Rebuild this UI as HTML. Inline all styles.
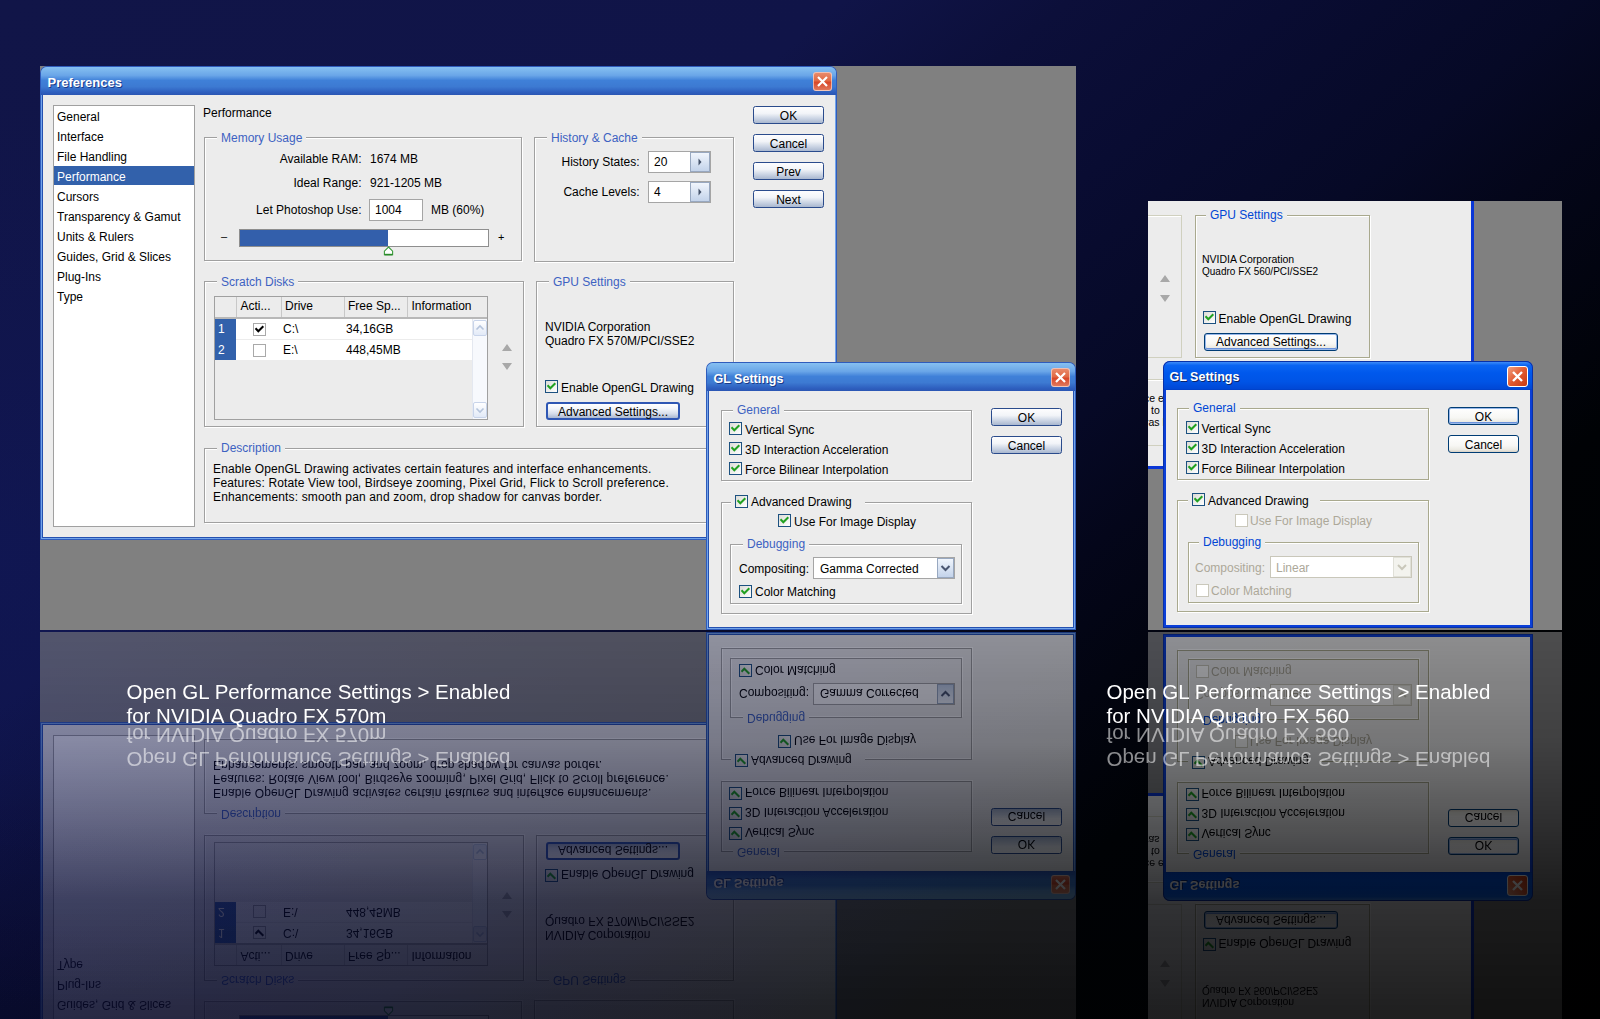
<!DOCTYPE html><html><head><meta charset="utf-8"><style>
html,body{margin:0;padding:0}
body{width:1600px;height:1019px;overflow:hidden;position:relative;font-family:"Liberation Sans", sans-serif;background:radial-gradient(ellipse 500px 450px at 0 560px,rgba(16,26,100,0.35),rgba(16,26,100,0) 100%),linear-gradient(to bottom,rgba(0,0,0,0) 75%,rgba(0,0,0,0.18) 100%),linear-gradient(140deg,#111548 0%,#101448 30%,#0c0f3a 38%,#090c32 46%,#060926 56%,#04061a 62%,#020410 68%,#000205 75%,#000 100%)}
#scene,#refl{position:absolute;left:0;top:0;width:1600px;height:631px}
#refl{transform-origin:0 631px;transform:scaleY(-1);-webkit-mask-image:linear-gradient(to bottom,rgba(0,0,0,0.13) 243px,rgba(0,0,0,0.21) 362px,rgba(0,0,0,0.36) 442px,rgba(0,0,0,0.5) 522px,rgba(0,0,0,0.6) 631px);mask-image:linear-gradient(to bottom,rgba(0,0,0,0.13) 243px,rgba(0,0,0,0.21) 362px,rgba(0,0,0,0.36) 442px,rgba(0,0,0,0.5) 522px,rgba(0,0,0,0.6) 631px)}
</style></head><body>
<div id="scene"><div style="position:absolute;left:40px;top:66px;width:1036px;height:564px;background:#808080"></div><div style="position:absolute;left:40px;top:66px;width:797px;height:474px;background:#2f5cbc;border-radius:7px 7px 0 0"></div><div style="position:absolute;left:41px;top:67px;width:795px;height:472px;background:#72a4ea;border-radius:6px 6px 0 0"></div><div style="position:absolute;left:42px;top:68px;width:793px;height:470px;background:#2450b0;border-radius:5px 5px 0 0"></div><div style="position:absolute;left:41px;top:67px;width:795px;height:28px;border-radius:6px 6px 0 0;background:linear-gradient(#86c0f1 0%,#6aa6e8 30%,#3f80d8 48%,#3d7ad2 70%,#2e5fbf 90%,#2b56b3 100%)"></div><div style="position:absolute;left:47.5px;top:74.50px;font-size:13px;line-height:16px;color:#fff;font-weight:bold;white-space:nowrap;text-shadow:1px 1px 0 #1a3a8a">Preferences</div><div style="position:absolute;left:813px;top:72px;width:19px;height:19px;border-radius:3px;border:1px solid #fff8;box-sizing:border-box;background:linear-gradient(#e98a6a 0%,#e16a45 45%,#d9482a 55%,#e0785c 100%)"></div><svg style="position:absolute;left:813px;top:72px" width="19" height="19" viewBox="0 0 19 19"><path d="M5 5 L14 14 M14 5 L5 14" stroke="#fff" stroke-width="2.2"/></svg><div style="position:absolute;left:43px;top:95px;width:792px;height:442px;background:#ececec"></div><div style="position:absolute;left:53px;top:105px;width:142px;height:422px;background:#fff;border:1px solid #a0a0a0;box-sizing:border-box"></div><div style="position:absolute;left:54px;top:166px;width:140px;height:19px;background:#3261ab"></div><div style="position:absolute;left:57px;top:109.84px;font-size:12px;line-height:14px;color:#000;font-weight:normal;white-space:nowrap;">General</div><div style="position:absolute;left:57px;top:129.84px;font-size:12px;line-height:14px;color:#000;font-weight:normal;white-space:nowrap;">Interface</div><div style="position:absolute;left:57px;top:149.84px;font-size:12px;line-height:14px;color:#000;font-weight:normal;white-space:nowrap;">File Handling</div><div style="position:absolute;left:57px;top:169.84px;font-size:12px;line-height:14px;color:#fff;font-weight:normal;white-space:nowrap;">Performance</div><div style="position:absolute;left:57px;top:189.84px;font-size:12px;line-height:14px;color:#000;font-weight:normal;white-space:nowrap;">Cursors</div><div style="position:absolute;left:57px;top:209.84px;font-size:12px;line-height:14px;color:#000;font-weight:normal;white-space:nowrap;">Transparency &amp; Gamut</div><div style="position:absolute;left:57px;top:229.84px;font-size:12px;line-height:14px;color:#000;font-weight:normal;white-space:nowrap;">Units &amp; Rulers</div><div style="position:absolute;left:57px;top:249.84px;font-size:12px;line-height:14px;color:#000;font-weight:normal;white-space:nowrap;">Guides, Grid &amp; Slices</div><div style="position:absolute;left:57px;top:269.84px;font-size:12px;line-height:14px;color:#000;font-weight:normal;white-space:nowrap;">Plug-Ins</div><div style="position:absolute;left:57px;top:289.84px;font-size:12px;line-height:14px;color:#000;font-weight:normal;white-space:nowrap;">Type</div><div style="position:absolute;left:203px;top:105.84px;font-size:12px;line-height:14px;color:#000;font-weight:normal;white-space:nowrap;">Performance</div><div style="position:absolute;left:204px;top:137px;width:318px;height:124px;border:1px solid #a0a0a0;box-shadow:inset 1px 1px 0 #fff, 1px 1px 0 #fff;box-sizing:border-box"></div><div style="position:absolute;left:217px;top:129px;height:16px;background:#ececec;padding:0 4px;font-size:12px;line-height:16px;color:transparent;white-space:nowrap">Memory Usage</div><div style="position:absolute;left:221px;top:130.84px;font-size:12px;line-height:14px;color:#3d62c2;font-weight:normal;white-space:nowrap;">Memory Usage</div><div style="position:absolute;right:1238.5px;top:151.84px;font-size:12px;line-height:14px;color:#000;font-weight:normal;white-space:nowrap;">Available RAM:</div><div style="position:absolute;left:370px;top:151.84px;font-size:12px;line-height:14px;color:#000;font-weight:normal;white-space:nowrap;">1674 MB</div><div style="position:absolute;right:1238.5px;top:175.84px;font-size:12px;line-height:14px;color:#000;font-weight:normal;white-space:nowrap;">Ideal Range:</div><div style="position:absolute;left:370px;top:175.84px;font-size:12px;line-height:14px;color:#000;font-weight:normal;white-space:nowrap;">921-1205 MB</div><div style="position:absolute;right:1238.5px;top:202.84px;font-size:12px;line-height:14px;color:#000;font-weight:normal;white-space:nowrap;">Let Photoshop Use:</div><div style="position:absolute;left:369px;top:199px;width:54px;height:22px;background:#fff;border:1px solid #a5a5a5;box-sizing:border-box"></div><div style="position:absolute;left:375px;top:202.84px;font-size:12px;line-height:14px;color:#000;font-weight:normal;white-space:nowrap;">1004</div><div style="position:absolute;left:431px;top:202.84px;font-size:12px;line-height:14px;color:#000;font-weight:normal;white-space:nowrap;">MB (60%)</div><div style="position:absolute;left:221px;top:229.69px;font-size:11px;line-height:13px;color:#000;font-weight:normal;white-space:nowrap;">–</div><div style="position:absolute;left:498px;top:230.69px;font-size:11px;line-height:13px;color:#000;font-weight:normal;white-space:nowrap;">+</div><div style="position:absolute;left:239px;top:229px;width:250px;height:18px;background:#fff;border:1px solid #8e8e8e;box-sizing:border-box"></div><div style="position:absolute;left:240px;top:230px;width:148px;height:16px;background:#335fab"></div><svg style="position:absolute;left:383px;top:246px" width="11" height="10" viewBox="0 0 11 10"><path d="M5.5 1 L9.6 5.2 L9.6 8.6 L1.4 8.6 L1.4 5.2 Z" fill="#fff" stroke="#3c9c3c" stroke-width="1.1"/><path d="M1.5 8.6 L9.5 8.6" stroke="#2a8a2a" stroke-width="1.6"/></svg><div style="position:absolute;left:534px;top:137px;width:200px;height:125px;border:1px solid #a0a0a0;box-shadow:inset 1px 1px 0 #fff, 1px 1px 0 #fff;box-sizing:border-box"></div><div style="position:absolute;left:547px;top:129px;height:16px;background:#ececec;padding:0 4px;font-size:12px;line-height:16px;color:transparent;white-space:nowrap">History &amp; Cache</div><div style="position:absolute;left:551px;top:130.84px;font-size:12px;line-height:14px;color:#3d62c2;font-weight:normal;white-space:nowrap;">History &amp; Cache</div><div style="position:absolute;right:960.5px;top:154.84px;font-size:12px;line-height:14px;color:#000;font-weight:normal;white-space:nowrap;">History States:</div><div style="position:absolute;right:960.5px;top:184.84px;font-size:12px;line-height:14px;color:#000;font-weight:normal;white-space:nowrap;">Cache Levels:</div><div style="position:absolute;left:648px;top:151px;width:63px;height:22px;background:#fff;border:1px solid #a5a5a5;box-sizing:border-box"></div><div style="position:absolute;left:690px;top:152px;width:20px;height:20px;border:1px solid #98a8c0;box-sizing:border-box;background:linear-gradient(#f0f5fc,#c3d3ea)"></div><svg style="position:absolute;left:690px;top:152px" width="20" height="20" viewBox="0 0 20 20"><path d="M8.5 6.5 L11.5 10 L8.5 13.5 Z" fill="#44526a"/></svg><div style="position:absolute;left:654px;top:154.84px;font-size:12px;line-height:14px;color:#000;font-weight:normal;white-space:nowrap;">20</div><div style="position:absolute;left:648px;top:181px;width:63px;height:22px;background:#fff;border:1px solid #a5a5a5;box-sizing:border-box"></div><div style="position:absolute;left:690px;top:182px;width:20px;height:20px;border:1px solid #98a8c0;box-sizing:border-box;background:linear-gradient(#f0f5fc,#c3d3ea)"></div><svg style="position:absolute;left:690px;top:182px" width="20" height="20" viewBox="0 0 20 20"><path d="M8.5 6.5 L11.5 10 L8.5 13.5 Z" fill="#44526a"/></svg><div style="position:absolute;left:654px;top:184.84px;font-size:12px;line-height:14px;color:#000;font-weight:normal;white-space:nowrap;">4</div><div style="position:absolute;left:753px;top:106px;width:71px;height:18px;border:1px solid #2a4b8c;border-radius:2.5px;box-sizing:border-box;background:linear-gradient(#fdfdfe 0%,#f2f4f8 40%,#cfd8e6 68%,#a9b7cf 100%);"></div><div style="position:absolute;left:488.5px;width:600px;text-align:center;top:108.84px;font-size:12px;line-height:14px;color:#000;font-weight:normal;white-space:nowrap;">OK</div><div style="position:absolute;left:753px;top:134px;width:71px;height:18px;border:1px solid #2a4b8c;border-radius:2.5px;box-sizing:border-box;background:linear-gradient(#fdfdfe 0%,#f2f4f8 40%,#cfd8e6 68%,#a9b7cf 100%);"></div><div style="position:absolute;left:488.5px;width:600px;text-align:center;top:136.84px;font-size:12px;line-height:14px;color:#000;font-weight:normal;white-space:nowrap;">Cancel</div><div style="position:absolute;left:753px;top:162px;width:71px;height:18px;border:1px solid #2a4b8c;border-radius:2.5px;box-sizing:border-box;background:linear-gradient(#fdfdfe 0%,#f2f4f8 40%,#cfd8e6 68%,#a9b7cf 100%);"></div><div style="position:absolute;left:488.5px;width:600px;text-align:center;top:164.84px;font-size:12px;line-height:14px;color:#000;font-weight:normal;white-space:nowrap;">Prev</div><div style="position:absolute;left:753px;top:190px;width:71px;height:18px;border:1px solid #2a4b8c;border-radius:2.5px;box-sizing:border-box;background:linear-gradient(#fdfdfe 0%,#f2f4f8 40%,#cfd8e6 68%,#a9b7cf 100%);"></div><div style="position:absolute;left:488.5px;width:600px;text-align:center;top:192.84px;font-size:12px;line-height:14px;color:#000;font-weight:normal;white-space:nowrap;">Next</div><div style="position:absolute;left:204px;top:281px;width:320px;height:146px;border:1px solid #a0a0a0;box-shadow:inset 1px 1px 0 #fff, 1px 1px 0 #fff;box-sizing:border-box"></div><div style="position:absolute;left:217px;top:273px;height:16px;background:#ececec;padding:0 4px;font-size:12px;line-height:16px;color:transparent;white-space:nowrap">Scratch Disks</div><div style="position:absolute;left:221px;top:274.84px;font-size:12px;line-height:14px;color:#3d62c2;font-weight:normal;white-space:nowrap;">Scratch Disks</div><div style="position:absolute;left:214px;top:296px;width:274px;height:124px;background:#ececec;border:1px solid #a0a0a0;box-sizing:border-box"></div><div style="position:absolute;left:215px;top:317px;width:272px;height:2px;background:#b8b8b8"></div><div style="position:absolute;left:236px;top:297px;width:1px;height:20px;background:#c8c8c8"></div><div style="position:absolute;left:281px;top:297px;width:1px;height:20px;background:#c8c8c8"></div><div style="position:absolute;left:344px;top:297px;width:1px;height:20px;background:#c8c8c8"></div><div style="position:absolute;left:407px;top:297px;width:1px;height:20px;background:#c8c8c8"></div><div style="position:absolute;left:240.5px;top:298.84px;font-size:12px;line-height:14px;color:#000;font-weight:normal;white-space:nowrap;">Acti...</div><div style="position:absolute;left:285px;top:298.84px;font-size:12px;line-height:14px;color:#000;font-weight:normal;white-space:nowrap;">Drive</div><div style="position:absolute;left:348px;top:298.84px;font-size:12px;line-height:14px;color:#000;font-weight:normal;white-space:nowrap;">Free Sp...</div><div style="position:absolute;left:411.5px;top:298.84px;font-size:12px;line-height:14px;color:#000;font-weight:normal;white-space:nowrap;">Information</div><div style="position:absolute;left:236px;top:319px;width:236px;height:41px;background:#fff"></div><div style="position:absolute;left:236px;top:339px;width:236px;height:1px;background:#ececec"></div><div style="position:absolute;left:215px;top:319px;width:21px;height:41px;background:#3261ab"></div><div style="position:absolute;left:218px;top:321.84px;font-size:12px;line-height:14px;color:#fff;font-weight:normal;white-space:nowrap;">1</div><div style="position:absolute;left:218px;top:342.84px;font-size:12px;line-height:14px;color:#fff;font-weight:normal;white-space:nowrap;">2</div><div style="position:absolute;left:253px;top:323px;width:13px;height:13px;border:1px solid #a9a9a9;background:#fff;box-sizing:border-box"></div><svg style="position:absolute;left:253px;top:323px" width="13" height="13" viewBox="0 0 13 13"><path d="M3.2 6 L5.3 8.2 L9.6 3.9" stroke="#000" stroke-width="2" fill="none" stroke-linecap="square"/></svg><div style="position:absolute;left:253px;top:344px;width:13px;height:13px;border:1px solid #a9a9a9;background:#fff;box-sizing:border-box"></div><div style="position:absolute;left:283px;top:321.84px;font-size:12px;line-height:14px;color:#000;font-weight:normal;white-space:nowrap;">C:\</div><div style="position:absolute;left:346px;top:321.84px;font-size:12px;line-height:14px;color:#000;font-weight:normal;white-space:nowrap;">34,16GB</div><div style="position:absolute;left:283px;top:342.84px;font-size:12px;line-height:14px;color:#000;font-weight:normal;white-space:nowrap;">E:\</div><div style="position:absolute;left:346px;top:342.84px;font-size:12px;line-height:14px;color:#000;font-weight:normal;white-space:nowrap;">448,45MB</div><div style="position:absolute;left:472px;top:319px;width:15px;height:100px;background:#f7f9fd;border-left:1px solid #e4e8f0;box-sizing:border-box"></div><div style="position:absolute;left:473px;top:320px;width:14px;height:16px;border:1px solid #c8d4ea;border-radius:2px;background:linear-gradient(#ffffff,#e2eaf7);box-sizing:border-box"></div><div style="position:absolute;left:473px;top:402px;width:14px;height:16px;border:1px solid #c8d4ea;border-radius:2px;background:linear-gradient(#ffffff,#e2eaf7);box-sizing:border-box"></div><svg style="position:absolute;left:473px;top:320px" width="14" height="16"><path d="M3.5 9.5 L7 6 L10.5 9.5" stroke="#b5c4dc" stroke-width="1.6" fill="none"/></svg><svg style="position:absolute;left:473px;top:402px" width="14" height="16"><path d="M3.5 6.5 L7 10 L10.5 6.5" stroke="#b5c4dc" stroke-width="1.6" fill="none"/></svg><svg style="position:absolute;left:501px;top:342px" width="12" height="30"><path d="M6 2 L11 9 L1 9 Z M1 21 L11 21 L6 28 Z" fill="#a8a8a8"/></svg><div style="position:absolute;left:536px;top:281px;width:198px;height:146px;border:1px solid #a0a0a0;box-shadow:inset 1px 1px 0 #fff, 1px 1px 0 #fff;box-sizing:border-box"></div><div style="position:absolute;left:549px;top:273px;height:16px;background:#ececec;padding:0 4px;font-size:12px;line-height:16px;color:transparent;white-space:nowrap">GPU Settings</div><div style="position:absolute;left:553px;top:274.84px;font-size:12px;line-height:14px;color:#3d62c2;font-weight:normal;white-space:nowrap;">GPU Settings</div><div style="position:absolute;left:545px;top:319.84px;font-size:12px;line-height:14px;color:#000;font-weight:normal;white-space:nowrap;">NVIDIA Corporation</div><div style="position:absolute;left:545px;top:333.84px;font-size:12px;line-height:14px;color:#000;font-weight:normal;white-space:nowrap;">Quadro FX 570M/PCI/SSE2</div><div style="position:absolute;left:545px;top:380px;width:13px;height:13px;border:1px solid #1c5180;background:linear-gradient(135deg,#dcdcd7,#fff);box-sizing:border-box"></div><svg style="position:absolute;left:545px;top:380px" width="13" height="13" viewBox="0 0 13 13"><path d="M3.2 6 L5.3 8.2 L9.6 3.9" stroke="#21a121" stroke-width="2" fill="none" stroke-linecap="square"/></svg><div style="position:absolute;left:561px;top:380.84px;font-size:12px;line-height:14px;color:#000;font-weight:normal;white-space:nowrap;">Enable OpenGL Drawing</div><div style="position:absolute;left:546px;top:402px;width:134px;height:18px;border:2px solid #2f57b4;border-radius:3px;box-sizing:border-box;background:linear-gradient(#ffffff 0%,#f2f5fa 35%,#d4dcea 70%,#a9b8d2 100%)"></div><div style="position:absolute;left:313px;width:600px;text-align:center;top:404.84px;font-size:12px;line-height:14px;color:#000;font-weight:normal;white-space:nowrap;">Advanced Settings...</div><div style="position:absolute;left:204px;top:448px;width:556px;height:75px;border:1px solid #a0a0a0;box-shadow:inset 1px 1px 0 #fff, 1px 1px 0 #fff;box-sizing:border-box"></div><div style="position:absolute;left:217px;top:440px;height:16px;background:#ececec;padding:0 4px;font-size:12px;line-height:16px;color:transparent;white-space:nowrap">Description</div><div style="position:absolute;left:221px;top:440.84px;font-size:12px;line-height:14px;color:#3d62c2;font-weight:normal;white-space:nowrap;">Description</div><div style="position:absolute;left:213px;top:461.84px;font-size:12px;line-height:14px;color:#000;font-weight:normal;white-space:nowrap;letter-spacing:0.14px">Enable OpenGL Drawing activates certain features and interface enhancements.</div><div style="position:absolute;left:213px;top:475.84px;font-size:12px;line-height:14px;color:#000;font-weight:normal;white-space:nowrap;letter-spacing:0.14px">Features: Rotate View tool, Birdseye zooming, Pixel Grid, Flick to Scroll preference.</div><div style="position:absolute;left:213px;top:489.84px;font-size:12px;line-height:14px;color:#000;font-weight:normal;white-space:nowrap;letter-spacing:0.14px">Enhancements: smooth pan and zoom, drop shadow for canvas border.</div><div style="position:absolute;left:706px;top:362px;width:370px;height:268px;background:#2f5cbc;border-radius:7px 7px 0 0"></div><div style="position:absolute;left:707px;top:363px;width:368px;height:266px;background:#72a4ea;border-radius:6px 6px 0 0"></div><div style="position:absolute;left:708px;top:364px;width:366px;height:264px;background:#2450b0;border-radius:5px 5px 0 0"></div><div style="position:absolute;left:707px;top:363px;width:368px;height:28px;border-radius:6px 6px 0 0;background:linear-gradient(#86c0f1 0%,#6aa6e8 30%,#3f80d8 48%,#3d7ad2 70%,#2e5fbf 90%,#2b56b3 100%)"></div><div style="position:absolute;left:713.5px;top:371.67px;font-size:12.5px;line-height:15px;color:#fff;font-weight:bold;white-space:nowrap;text-shadow:1px 1px 0 #1a3a8a">GL Settings</div><div style="position:absolute;left:1051px;top:368px;width:19px;height:19px;border-radius:3px;border:1px solid #fff8;box-sizing:border-box;background:linear-gradient(#e98a6a 0%,#e16a45 45%,#d9482a 55%,#e0785c 100%)"></div><svg style="position:absolute;left:1051px;top:368px" width="19" height="19" viewBox="0 0 19 19"><path d="M5 5 L14 14 M14 5 L5 14" stroke="#fff" stroke-width="2.2"/></svg><div style="position:absolute;left:709px;top:391px;width:364px;height:236px;background:#ececec"></div><div style="position:absolute;left:721px;top:410px;width:251px;height:71px;border:1px solid #a0a0a0;box-shadow:inset 1px 1px 0 #fff, 1px 1px 0 #fff;box-sizing:border-box"></div><div style="position:absolute;left:733px;top:402px;height:16px;background:#ececec;padding:0 4px;font-size:12px;line-height:16px;color:transparent;white-space:nowrap">General</div><div style="position:absolute;left:737px;top:402.84px;font-size:12px;line-height:14px;color:#3d62c2;font-weight:normal;white-space:nowrap;">General</div><div style="position:absolute;left:729px;top:422px;width:13px;height:13px;border:1px solid #1c5180;background:linear-gradient(135deg,#dcdcd7,#fff);box-sizing:border-box"></div><svg style="position:absolute;left:729px;top:422px" width="13" height="13" viewBox="0 0 13 13"><path d="M3.2 6 L5.3 8.2 L9.6 3.9" stroke="#21a121" stroke-width="2" fill="none" stroke-linecap="square"/></svg><div style="position:absolute;left:745px;top:423.14px;font-size:12px;line-height:14px;color:#000;font-weight:normal;white-space:nowrap;">Vertical Sync</div><div style="position:absolute;left:729px;top:442px;width:13px;height:13px;border:1px solid #1c5180;background:linear-gradient(135deg,#dcdcd7,#fff);box-sizing:border-box"></div><svg style="position:absolute;left:729px;top:442px" width="13" height="13" viewBox="0 0 13 13"><path d="M3.2 6 L5.3 8.2 L9.6 3.9" stroke="#21a121" stroke-width="2" fill="none" stroke-linecap="square"/></svg><div style="position:absolute;left:745px;top:443.14px;font-size:12px;line-height:14px;color:#000;font-weight:normal;white-space:nowrap;">3D Interaction Acceleration</div><div style="position:absolute;left:729px;top:462px;width:13px;height:13px;border:1px solid #1c5180;background:linear-gradient(135deg,#dcdcd7,#fff);box-sizing:border-box"></div><svg style="position:absolute;left:729px;top:462px" width="13" height="13" viewBox="0 0 13 13"><path d="M3.2 6 L5.3 8.2 L9.6 3.9" stroke="#21a121" stroke-width="2" fill="none" stroke-linecap="square"/></svg><div style="position:absolute;left:745px;top:463.14px;font-size:12px;line-height:14px;color:#000;font-weight:normal;white-space:nowrap;">Force Bilinear Interpolation</div><div style="position:absolute;left:991px;top:408px;width:71px;height:18px;border:1px solid #2a4b8c;border-radius:2.5px;box-sizing:border-box;background:linear-gradient(#fdfdfe 0%,#f2f4f8 40%,#cfd8e6 68%,#a9b7cf 100%);"></div><div style="position:absolute;left:726.5px;width:600px;text-align:center;top:410.84px;font-size:12px;line-height:14px;color:#000;font-weight:normal;white-space:nowrap;">OK</div><div style="position:absolute;left:991px;top:436px;width:71px;height:18px;border:1px solid #2a4b8c;border-radius:2.5px;box-sizing:border-box;background:linear-gradient(#fdfdfe 0%,#f2f4f8 40%,#cfd8e6 68%,#a9b7cf 100%);"></div><div style="position:absolute;left:726.5px;width:600px;text-align:center;top:438.84px;font-size:12px;line-height:14px;color:#000;font-weight:normal;white-space:nowrap;">Cancel</div><div style="position:absolute;left:721px;top:502px;width:251px;height:112px;border:1px solid #a0a0a0;box-shadow:inset 1px 1px 0 #fff, 1px 1px 0 #fff;box-sizing:border-box"></div><div style="position:absolute;left:731px;top:494px;width:134px;height:14px;background:#ececec"></div><div style="position:absolute;left:735px;top:495px;width:13px;height:13px;border:1px solid #1c5180;background:linear-gradient(135deg,#dcdcd7,#fff);box-sizing:border-box"></div><svg style="position:absolute;left:735px;top:495px" width="13" height="13" viewBox="0 0 13 13"><path d="M3.2 6 L5.3 8.2 L9.6 3.9" stroke="#21a121" stroke-width="2" fill="none" stroke-linecap="square"/></svg><div style="position:absolute;left:751px;top:494.84px;font-size:12px;line-height:14px;color:#000;font-weight:normal;white-space:nowrap;">Advanced Drawing</div><div style="position:absolute;left:778px;top:514px;width:13px;height:13px;border:1px solid #1c5180;background:linear-gradient(135deg,#dcdcd7,#fff);box-sizing:border-box"></div><svg style="position:absolute;left:778px;top:514px" width="13" height="13" viewBox="0 0 13 13"><path d="M3.2 6 L5.3 8.2 L9.6 3.9" stroke="#21a121" stroke-width="2" fill="none" stroke-linecap="square"/></svg><div style="position:absolute;left:794px;top:514.84px;font-size:12px;line-height:14px;color:#000;font-weight:normal;white-space:nowrap;">Use For Image Display</div><div style="position:absolute;left:730px;top:544px;width:232px;height:60px;border:1px solid #a0a0a0;box-shadow:inset 1px 1px 0 #fff, 1px 1px 0 #fff;box-sizing:border-box"></div><div style="position:absolute;left:743px;top:536px;height:16px;background:#ececec;padding:0 4px;font-size:12px;line-height:16px;color:transparent;white-space:nowrap">Debugging</div><div style="position:absolute;left:747px;top:536.84px;font-size:12px;line-height:14px;color:#3d62c2;font-weight:normal;white-space:nowrap;">Debugging</div><div style="position:absolute;left:739px;top:561.84px;font-size:12px;line-height:14px;color:#000;font-weight:normal;white-space:nowrap;">Compositing:</div><div style="position:absolute;left:813px;top:557px;width:142px;height:22px;background:#fff;border:1px solid #a5a5a5;box-sizing:border-box"></div><div style="position:absolute;left:937px;top:558px;width:17px;height:20px;border:1px solid #98a8c0;box-sizing:border-box;background:linear-gradient(#f0f5fc,#c3d3ea)"></div><svg style="position:absolute;left:937px;top:558px" width="17" height="20"><path d="M4.5 8 L8.5 12 L12.5 8" stroke="#4a5670" stroke-width="2" fill="none"/></svg><div style="position:absolute;left:820px;top:561.84px;font-size:12px;line-height:14px;color:#000;font-weight:normal;white-space:nowrap;">Gamma Corrected</div><div style="position:absolute;left:739px;top:585px;width:13px;height:13px;border:1px solid #1c5180;background:linear-gradient(135deg,#dcdcd7,#fff);box-sizing:border-box"></div><svg style="position:absolute;left:739px;top:585px" width="13" height="13" viewBox="0 0 13 13"><path d="M3.2 6 L5.3 8.2 L9.6 3.9" stroke="#21a121" stroke-width="2" fill="none" stroke-linecap="square"/></svg><div style="position:absolute;left:755px;top:584.84px;font-size:12px;line-height:14px;color:#000;font-weight:normal;white-space:nowrap;">Color Matching</div><div style="position:absolute;left:1148px;top:201px;width:414px;height:429px;background:#808080"></div><div style="position:absolute;left:0;top:0;width:1600px;height:631px;clip-path:inset(201px 38px 0 1148px)"><div style="position:absolute;left:1148px;top:201px;width:326px;height:268px;background:#0a36d6"></div><div style="position:absolute;left:1148px;top:201px;width:323px;height:265px;background:#ececec"></div><div style="position:absolute;left:1130px;top:215px;width:52px;height:143px;border:1px solid #d0d0bf;box-shadow:inset 1px 1px 0 #fff;box-sizing:border-box"></div><div style="position:absolute;left:1195px;top:215px;width:175px;height:143px;border:1px solid #a9a98e;box-shadow:inset 1px 1px 0 #fff, 1px 1px 0 #fff;box-sizing:border-box"></div><div style="position:absolute;left:1206px;top:207px;height:16px;background:#ececec;padding:0 4px;font-size:12px;line-height:16px;color:transparent;white-space:nowrap">GPU Settings</div><div style="position:absolute;left:1210px;top:208.44px;font-size:12px;line-height:14px;color:#0046d5;font-weight:normal;white-space:nowrap;">GPU Settings</div><div style="position:absolute;left:1202px;top:252.86px;font-size:10.5px;line-height:13px;color:#000;font-weight:normal;white-space:nowrap;">NVIDIA Corporation</div><div style="position:absolute;left:1202px;top:265.54px;font-size:10px;line-height:12px;color:#000;font-weight:normal;white-space:nowrap;">Quadro FX 560/PCI/SSE2</div><svg style="position:absolute;left:1159px;top:273px" width="12" height="32"><path d="M6 2 L11 9 L1 9 Z M1 22 L11 22 L6 29 Z" fill="#a8a8a8"/></svg><div style="position:absolute;left:1203px;top:311px;width:13px;height:13px;border:1px solid #1c5180;background:linear-gradient(135deg,#dcdcd7,#fff);box-sizing:border-box"></div><svg style="position:absolute;left:1203px;top:311px" width="13" height="13" viewBox="0 0 13 13"><path d="M3.2 6 L5.3 8.2 L9.6 3.9" stroke="#21a121" stroke-width="2" fill="none" stroke-linecap="square"/></svg><div style="position:absolute;left:1218.5px;top:311.84px;font-size:12px;line-height:14px;color:#000;font-weight:normal;white-space:nowrap;">Enable OpenGL Drawing</div><div style="position:absolute;left:1204px;top:333px;width:134px;height:18px;border:1px solid #003c74;border-radius:3px;box-sizing:border-box;background:linear-gradient(#ffffff 0%,#f7f7f4 60%,#ecebe4 85%,#d6d0c5 100%);box-shadow:inset 0 0 0 1px #98b8ea, inset 0 -1px 0 1px #6b92db"></div><div style="position:absolute;left:971px;width:600px;text-align:center;top:334.84px;font-size:12px;line-height:14px;color:#000;font-weight:normal;white-space:nowrap;">Advanced Settings...</div><div style="position:absolute;left:1130px;top:379px;width:70px;height:67px;border:1px solid #d0d0bf;box-shadow:inset 1px 1px 0 #fff;box-sizing:border-box"></div><div style="position:absolute;left:1144px;top:391.86px;font-size:10.5px;line-height:13px;color:#000;font-weight:normal;white-space:nowrap;">ce e</div><div style="position:absolute;left:1151px;top:403.86px;font-size:10.5px;line-height:13px;color:#000;font-weight:normal;white-space:nowrap;">to</div><div style="position:absolute;left:1145px;top:415.86px;font-size:10.5px;line-height:13px;color:#000;font-weight:normal;white-space:nowrap;">ras l</div></div><div style="position:absolute;left:1163px;top:361px;width:370px;height:267px;background:#0b3fd8;border-radius:7px 7px 0 0;box-shadow:inset 0 0 0 1px #0831a8"></div><div style="position:absolute;left:1164px;top:362px;width:368px;height:28px;border-radius:6px 6px 0 0;background:linear-gradient(#3d8bf8 0%,#0a64f2 12%,#0058ec 40%,#0054e6 70%,#0048d6 95%,#003fc4 100%)"></div><div style="position:absolute;left:1169.5px;top:369.67px;font-size:12.5px;line-height:15px;color:#fff;font-weight:bold;white-space:nowrap;text-shadow:1px 1px 0 #0a246a">GL Settings</div><div style="position:absolute;left:1507px;top:366px;width:21px;height:21px;border-radius:3px;border:1px solid #fff;box-sizing:border-box;background:linear-gradient(135deg,#f0a080 0%,#e25a30 50%,#c63a12 100%)"></div><svg style="position:absolute;left:1507px;top:366px" width="21" height="21" viewBox="0 0 21 21"><path d="M6 6 L15 15 M15 6 L6 15" stroke="#fff" stroke-width="2.4"/></svg><div style="position:absolute;left:1166px;top:390px;width:364px;height:235px;background:#ececec"></div><div style="position:absolute;left:1177px;top:408px;width:252px;height:72px;border:1px solid #a9a98e;box-shadow:inset 1px 1px 0 #fff, 1px 1px 0 #fff;box-sizing:border-box"></div><div style="position:absolute;left:1189px;top:400px;height:16px;background:#ececec;padding:0 4px;font-size:12px;line-height:16px;color:transparent;white-space:nowrap">General</div><div style="position:absolute;left:1193px;top:400.84px;font-size:12px;line-height:14px;color:#0046d5;font-weight:normal;white-space:nowrap;">General</div><div style="position:absolute;left:1186px;top:421px;width:13px;height:13px;border:1px solid #1c5180;background:linear-gradient(135deg,#dcdcd7,#fff);box-sizing:border-box"></div><svg style="position:absolute;left:1186px;top:421px" width="13" height="13" viewBox="0 0 13 13"><path d="M3.2 6 L5.3 8.2 L9.6 3.9" stroke="#21a121" stroke-width="2" fill="none" stroke-linecap="square"/></svg><div style="position:absolute;left:1201.5px;top:422.14px;font-size:12px;line-height:14px;color:#000;font-weight:normal;white-space:nowrap;">Vertical Sync</div><div style="position:absolute;left:1186px;top:441px;width:13px;height:13px;border:1px solid #1c5180;background:linear-gradient(135deg,#dcdcd7,#fff);box-sizing:border-box"></div><svg style="position:absolute;left:1186px;top:441px" width="13" height="13" viewBox="0 0 13 13"><path d="M3.2 6 L5.3 8.2 L9.6 3.9" stroke="#21a121" stroke-width="2" fill="none" stroke-linecap="square"/></svg><div style="position:absolute;left:1201.5px;top:442.14px;font-size:12px;line-height:14px;color:#000;font-weight:normal;white-space:nowrap;">3D Interaction Acceleration</div><div style="position:absolute;left:1186px;top:461px;width:13px;height:13px;border:1px solid #1c5180;background:linear-gradient(135deg,#dcdcd7,#fff);box-sizing:border-box"></div><svg style="position:absolute;left:1186px;top:461px" width="13" height="13" viewBox="0 0 13 13"><path d="M3.2 6 L5.3 8.2 L9.6 3.9" stroke="#21a121" stroke-width="2" fill="none" stroke-linecap="square"/></svg><div style="position:absolute;left:1201.5px;top:462.14px;font-size:12px;line-height:14px;color:#000;font-weight:normal;white-space:nowrap;">Force Bilinear Interpolation</div><div style="position:absolute;left:1448px;top:407px;width:71px;height:18px;border:1px solid #003c74;border-radius:3px;box-sizing:border-box;background:linear-gradient(#ffffff 0%,#f7f7f4 60%,#ecebe4 85%,#d6d0c5 100%);box-shadow:inset 0 0 0 1px #98b8ea, inset 0 -1px 0 1px #6b92db;"></div><div style="position:absolute;left:1183.5px;width:600px;text-align:center;top:409.84px;font-size:12px;line-height:14px;color:#000;font-weight:normal;white-space:nowrap;">OK</div><div style="position:absolute;left:1448px;top:435px;width:71px;height:18px;border:1px solid #003c74;border-radius:3px;box-sizing:border-box;background:linear-gradient(#ffffff 0%,#f7f7f4 60%,#ecebe4 85%,#d6d0c5 100%);"></div><div style="position:absolute;left:1183.5px;width:600px;text-align:center;top:437.84px;font-size:12px;line-height:14px;color:#000;font-weight:normal;white-space:nowrap;">Cancel</div><div style="position:absolute;left:1177px;top:500px;width:252px;height:112px;border:1px solid #a9a98e;box-shadow:inset 1px 1px 0 #fff, 1px 1px 0 #fff;box-sizing:border-box"></div><div style="position:absolute;left:1188px;top:492px;width:132px;height:16px;background:#ececec"></div><div style="position:absolute;left:1192px;top:493px;width:13px;height:13px;border:1px solid #1c5180;background:linear-gradient(135deg,#dcdcd7,#fff);box-sizing:border-box"></div><svg style="position:absolute;left:1192px;top:493px" width="13" height="13" viewBox="0 0 13 13"><path d="M3.2 6 L5.3 8.2 L9.6 3.9" stroke="#21a121" stroke-width="2" fill="none" stroke-linecap="square"/></svg><div style="position:absolute;left:1208px;top:493.84px;font-size:12px;line-height:14px;color:#000;font-weight:normal;white-space:nowrap;">Advanced Drawing</div><div style="position:absolute;left:1235px;top:514px;width:13px;height:13px;border:1px solid #cac8bb;background:#fff;box-sizing:border-box"></div><div style="position:absolute;left:1250px;top:513.84px;font-size:12px;line-height:14px;color:#aca899;font-weight:normal;white-space:nowrap;">Use For Image Display</div><div style="position:absolute;left:1188px;top:542px;width:231px;height:61px;border:1px solid #a9a98e;box-shadow:inset 1px 1px 0 #fff, 1px 1px 0 #fff;box-sizing:border-box"></div><div style="position:absolute;left:1199px;top:534px;height:16px;background:#ececec;padding:0 4px;font-size:12px;line-height:16px;color:transparent;white-space:nowrap">Debugging</div><div style="position:absolute;left:1203px;top:534.84px;font-size:12px;line-height:14px;color:#0046d5;font-weight:normal;white-space:nowrap;">Debugging</div><div style="position:absolute;left:1195px;top:560.84px;font-size:12px;line-height:14px;color:#aca899;font-weight:normal;white-space:nowrap;">Compositing:</div><div style="position:absolute;left:1270px;top:556px;width:142px;height:22px;background:#fff;border:1px solid #c9c7ba;box-sizing:border-box"></div><div style="position:absolute;left:1393px;top:557px;width:18px;height:20px;border:1px solid #e0e0d8;box-sizing:border-box;background:#f3f3ee"></div><svg style="position:absolute;left:1393px;top:557px" width="18" height="20"><path d="M5 8 L9 12 L13 8" stroke="#c9c7ba" stroke-width="2" fill="none"/></svg><div style="position:absolute;left:1276px;top:560.84px;font-size:12px;line-height:14px;color:#aca899;font-weight:normal;white-space:nowrap;">Linear</div><div style="position:absolute;left:1196px;top:584px;width:13px;height:13px;border:1px solid #cac8bb;background:#fff;box-sizing:border-box"></div><div style="position:absolute;left:1211px;top:583.84px;font-size:12px;line-height:14px;color:#aca899;font-weight:normal;white-space:nowrap;">Color Matching</div></div>
<div id="refl"><div style="position:absolute;left:40px;top:66px;width:1036px;height:564px;background:#808080"></div><div style="position:absolute;left:40px;top:66px;width:797px;height:474px;background:#2f5cbc;border-radius:7px 7px 0 0"></div><div style="position:absolute;left:41px;top:67px;width:795px;height:472px;background:#72a4ea;border-radius:6px 6px 0 0"></div><div style="position:absolute;left:42px;top:68px;width:793px;height:470px;background:#2450b0;border-radius:5px 5px 0 0"></div><div style="position:absolute;left:41px;top:67px;width:795px;height:28px;border-radius:6px 6px 0 0;background:linear-gradient(#86c0f1 0%,#6aa6e8 30%,#3f80d8 48%,#3d7ad2 70%,#2e5fbf 90%,#2b56b3 100%)"></div><div style="position:absolute;left:47.5px;top:74.50px;font-size:13px;line-height:16px;color:#fff;font-weight:bold;white-space:nowrap;text-shadow:1px 1px 0 #1a3a8a">Preferences</div><div style="position:absolute;left:813px;top:72px;width:19px;height:19px;border-radius:3px;border:1px solid #fff8;box-sizing:border-box;background:linear-gradient(#e98a6a 0%,#e16a45 45%,#d9482a 55%,#e0785c 100%)"></div><svg style="position:absolute;left:813px;top:72px" width="19" height="19" viewBox="0 0 19 19"><path d="M5 5 L14 14 M14 5 L5 14" stroke="#fff" stroke-width="2.2"/></svg><div style="position:absolute;left:43px;top:95px;width:792px;height:442px;background:#ececec"></div><div style="position:absolute;left:53px;top:105px;width:142px;height:422px;background:#fff;border:1px solid #a0a0a0;box-sizing:border-box"></div><div style="position:absolute;left:54px;top:166px;width:140px;height:19px;background:#3261ab"></div><div style="position:absolute;left:57px;top:109.84px;font-size:12px;line-height:14px;color:#000;font-weight:normal;white-space:nowrap;">General</div><div style="position:absolute;left:57px;top:129.84px;font-size:12px;line-height:14px;color:#000;font-weight:normal;white-space:nowrap;">Interface</div><div style="position:absolute;left:57px;top:149.84px;font-size:12px;line-height:14px;color:#000;font-weight:normal;white-space:nowrap;">File Handling</div><div style="position:absolute;left:57px;top:169.84px;font-size:12px;line-height:14px;color:#fff;font-weight:normal;white-space:nowrap;">Performance</div><div style="position:absolute;left:57px;top:189.84px;font-size:12px;line-height:14px;color:#000;font-weight:normal;white-space:nowrap;">Cursors</div><div style="position:absolute;left:57px;top:209.84px;font-size:12px;line-height:14px;color:#000;font-weight:normal;white-space:nowrap;">Transparency &amp; Gamut</div><div style="position:absolute;left:57px;top:229.84px;font-size:12px;line-height:14px;color:#000;font-weight:normal;white-space:nowrap;">Units &amp; Rulers</div><div style="position:absolute;left:57px;top:249.84px;font-size:12px;line-height:14px;color:#000;font-weight:normal;white-space:nowrap;">Guides, Grid &amp; Slices</div><div style="position:absolute;left:57px;top:269.84px;font-size:12px;line-height:14px;color:#000;font-weight:normal;white-space:nowrap;">Plug-Ins</div><div style="position:absolute;left:57px;top:289.84px;font-size:12px;line-height:14px;color:#000;font-weight:normal;white-space:nowrap;">Type</div><div style="position:absolute;left:203px;top:105.84px;font-size:12px;line-height:14px;color:#000;font-weight:normal;white-space:nowrap;">Performance</div><div style="position:absolute;left:204px;top:137px;width:318px;height:124px;border:1px solid #a0a0a0;box-shadow:inset 1px 1px 0 #fff, 1px 1px 0 #fff;box-sizing:border-box"></div><div style="position:absolute;left:217px;top:129px;height:16px;background:#ececec;padding:0 4px;font-size:12px;line-height:16px;color:transparent;white-space:nowrap">Memory Usage</div><div style="position:absolute;left:221px;top:130.84px;font-size:12px;line-height:14px;color:#3d62c2;font-weight:normal;white-space:nowrap;">Memory Usage</div><div style="position:absolute;right:1238.5px;top:151.84px;font-size:12px;line-height:14px;color:#000;font-weight:normal;white-space:nowrap;">Available RAM:</div><div style="position:absolute;left:370px;top:151.84px;font-size:12px;line-height:14px;color:#000;font-weight:normal;white-space:nowrap;">1674 MB</div><div style="position:absolute;right:1238.5px;top:175.84px;font-size:12px;line-height:14px;color:#000;font-weight:normal;white-space:nowrap;">Ideal Range:</div><div style="position:absolute;left:370px;top:175.84px;font-size:12px;line-height:14px;color:#000;font-weight:normal;white-space:nowrap;">921-1205 MB</div><div style="position:absolute;right:1238.5px;top:202.84px;font-size:12px;line-height:14px;color:#000;font-weight:normal;white-space:nowrap;">Let Photoshop Use:</div><div style="position:absolute;left:369px;top:199px;width:54px;height:22px;background:#fff;border:1px solid #a5a5a5;box-sizing:border-box"></div><div style="position:absolute;left:375px;top:202.84px;font-size:12px;line-height:14px;color:#000;font-weight:normal;white-space:nowrap;">1004</div><div style="position:absolute;left:431px;top:202.84px;font-size:12px;line-height:14px;color:#000;font-weight:normal;white-space:nowrap;">MB (60%)</div><div style="position:absolute;left:221px;top:229.69px;font-size:11px;line-height:13px;color:#000;font-weight:normal;white-space:nowrap;">–</div><div style="position:absolute;left:498px;top:230.69px;font-size:11px;line-height:13px;color:#000;font-weight:normal;white-space:nowrap;">+</div><div style="position:absolute;left:239px;top:229px;width:250px;height:18px;background:#fff;border:1px solid #8e8e8e;box-sizing:border-box"></div><div style="position:absolute;left:240px;top:230px;width:148px;height:16px;background:#335fab"></div><svg style="position:absolute;left:383px;top:246px" width="11" height="10" viewBox="0 0 11 10"><path d="M5.5 1 L9.6 5.2 L9.6 8.6 L1.4 8.6 L1.4 5.2 Z" fill="#fff" stroke="#3c9c3c" stroke-width="1.1"/><path d="M1.5 8.6 L9.5 8.6" stroke="#2a8a2a" stroke-width="1.6"/></svg><div style="position:absolute;left:534px;top:137px;width:200px;height:125px;border:1px solid #a0a0a0;box-shadow:inset 1px 1px 0 #fff, 1px 1px 0 #fff;box-sizing:border-box"></div><div style="position:absolute;left:547px;top:129px;height:16px;background:#ececec;padding:0 4px;font-size:12px;line-height:16px;color:transparent;white-space:nowrap">History &amp; Cache</div><div style="position:absolute;left:551px;top:130.84px;font-size:12px;line-height:14px;color:#3d62c2;font-weight:normal;white-space:nowrap;">History &amp; Cache</div><div style="position:absolute;right:960.5px;top:154.84px;font-size:12px;line-height:14px;color:#000;font-weight:normal;white-space:nowrap;">History States:</div><div style="position:absolute;right:960.5px;top:184.84px;font-size:12px;line-height:14px;color:#000;font-weight:normal;white-space:nowrap;">Cache Levels:</div><div style="position:absolute;left:648px;top:151px;width:63px;height:22px;background:#fff;border:1px solid #a5a5a5;box-sizing:border-box"></div><div style="position:absolute;left:690px;top:152px;width:20px;height:20px;border:1px solid #98a8c0;box-sizing:border-box;background:linear-gradient(#f0f5fc,#c3d3ea)"></div><svg style="position:absolute;left:690px;top:152px" width="20" height="20" viewBox="0 0 20 20"><path d="M8.5 6.5 L11.5 10 L8.5 13.5 Z" fill="#44526a"/></svg><div style="position:absolute;left:654px;top:154.84px;font-size:12px;line-height:14px;color:#000;font-weight:normal;white-space:nowrap;">20</div><div style="position:absolute;left:648px;top:181px;width:63px;height:22px;background:#fff;border:1px solid #a5a5a5;box-sizing:border-box"></div><div style="position:absolute;left:690px;top:182px;width:20px;height:20px;border:1px solid #98a8c0;box-sizing:border-box;background:linear-gradient(#f0f5fc,#c3d3ea)"></div><svg style="position:absolute;left:690px;top:182px" width="20" height="20" viewBox="0 0 20 20"><path d="M8.5 6.5 L11.5 10 L8.5 13.5 Z" fill="#44526a"/></svg><div style="position:absolute;left:654px;top:184.84px;font-size:12px;line-height:14px;color:#000;font-weight:normal;white-space:nowrap;">4</div><div style="position:absolute;left:753px;top:106px;width:71px;height:18px;border:1px solid #2a4b8c;border-radius:2.5px;box-sizing:border-box;background:linear-gradient(#fdfdfe 0%,#f2f4f8 40%,#cfd8e6 68%,#a9b7cf 100%);"></div><div style="position:absolute;left:488.5px;width:600px;text-align:center;top:108.84px;font-size:12px;line-height:14px;color:#000;font-weight:normal;white-space:nowrap;">OK</div><div style="position:absolute;left:753px;top:134px;width:71px;height:18px;border:1px solid #2a4b8c;border-radius:2.5px;box-sizing:border-box;background:linear-gradient(#fdfdfe 0%,#f2f4f8 40%,#cfd8e6 68%,#a9b7cf 100%);"></div><div style="position:absolute;left:488.5px;width:600px;text-align:center;top:136.84px;font-size:12px;line-height:14px;color:#000;font-weight:normal;white-space:nowrap;">Cancel</div><div style="position:absolute;left:753px;top:162px;width:71px;height:18px;border:1px solid #2a4b8c;border-radius:2.5px;box-sizing:border-box;background:linear-gradient(#fdfdfe 0%,#f2f4f8 40%,#cfd8e6 68%,#a9b7cf 100%);"></div><div style="position:absolute;left:488.5px;width:600px;text-align:center;top:164.84px;font-size:12px;line-height:14px;color:#000;font-weight:normal;white-space:nowrap;">Prev</div><div style="position:absolute;left:753px;top:190px;width:71px;height:18px;border:1px solid #2a4b8c;border-radius:2.5px;box-sizing:border-box;background:linear-gradient(#fdfdfe 0%,#f2f4f8 40%,#cfd8e6 68%,#a9b7cf 100%);"></div><div style="position:absolute;left:488.5px;width:600px;text-align:center;top:192.84px;font-size:12px;line-height:14px;color:#000;font-weight:normal;white-space:nowrap;">Next</div><div style="position:absolute;left:204px;top:281px;width:320px;height:146px;border:1px solid #a0a0a0;box-shadow:inset 1px 1px 0 #fff, 1px 1px 0 #fff;box-sizing:border-box"></div><div style="position:absolute;left:217px;top:273px;height:16px;background:#ececec;padding:0 4px;font-size:12px;line-height:16px;color:transparent;white-space:nowrap">Scratch Disks</div><div style="position:absolute;left:221px;top:274.84px;font-size:12px;line-height:14px;color:#3d62c2;font-weight:normal;white-space:nowrap;">Scratch Disks</div><div style="position:absolute;left:214px;top:296px;width:274px;height:124px;background:#ececec;border:1px solid #a0a0a0;box-sizing:border-box"></div><div style="position:absolute;left:215px;top:317px;width:272px;height:2px;background:#b8b8b8"></div><div style="position:absolute;left:236px;top:297px;width:1px;height:20px;background:#c8c8c8"></div><div style="position:absolute;left:281px;top:297px;width:1px;height:20px;background:#c8c8c8"></div><div style="position:absolute;left:344px;top:297px;width:1px;height:20px;background:#c8c8c8"></div><div style="position:absolute;left:407px;top:297px;width:1px;height:20px;background:#c8c8c8"></div><div style="position:absolute;left:240.5px;top:298.84px;font-size:12px;line-height:14px;color:#000;font-weight:normal;white-space:nowrap;">Acti...</div><div style="position:absolute;left:285px;top:298.84px;font-size:12px;line-height:14px;color:#000;font-weight:normal;white-space:nowrap;">Drive</div><div style="position:absolute;left:348px;top:298.84px;font-size:12px;line-height:14px;color:#000;font-weight:normal;white-space:nowrap;">Free Sp...</div><div style="position:absolute;left:411.5px;top:298.84px;font-size:12px;line-height:14px;color:#000;font-weight:normal;white-space:nowrap;">Information</div><div style="position:absolute;left:236px;top:319px;width:236px;height:41px;background:#fff"></div><div style="position:absolute;left:236px;top:339px;width:236px;height:1px;background:#ececec"></div><div style="position:absolute;left:215px;top:319px;width:21px;height:41px;background:#3261ab"></div><div style="position:absolute;left:218px;top:321.84px;font-size:12px;line-height:14px;color:#fff;font-weight:normal;white-space:nowrap;">1</div><div style="position:absolute;left:218px;top:342.84px;font-size:12px;line-height:14px;color:#fff;font-weight:normal;white-space:nowrap;">2</div><div style="position:absolute;left:253px;top:323px;width:13px;height:13px;border:1px solid #a9a9a9;background:#fff;box-sizing:border-box"></div><svg style="position:absolute;left:253px;top:323px" width="13" height="13" viewBox="0 0 13 13"><path d="M3.2 6 L5.3 8.2 L9.6 3.9" stroke="#000" stroke-width="2" fill="none" stroke-linecap="square"/></svg><div style="position:absolute;left:253px;top:344px;width:13px;height:13px;border:1px solid #a9a9a9;background:#fff;box-sizing:border-box"></div><div style="position:absolute;left:283px;top:321.84px;font-size:12px;line-height:14px;color:#000;font-weight:normal;white-space:nowrap;">C:\</div><div style="position:absolute;left:346px;top:321.84px;font-size:12px;line-height:14px;color:#000;font-weight:normal;white-space:nowrap;">34,16GB</div><div style="position:absolute;left:283px;top:342.84px;font-size:12px;line-height:14px;color:#000;font-weight:normal;white-space:nowrap;">E:\</div><div style="position:absolute;left:346px;top:342.84px;font-size:12px;line-height:14px;color:#000;font-weight:normal;white-space:nowrap;">448,45MB</div><div style="position:absolute;left:472px;top:319px;width:15px;height:100px;background:#f7f9fd;border-left:1px solid #e4e8f0;box-sizing:border-box"></div><div style="position:absolute;left:473px;top:320px;width:14px;height:16px;border:1px solid #c8d4ea;border-radius:2px;background:linear-gradient(#ffffff,#e2eaf7);box-sizing:border-box"></div><div style="position:absolute;left:473px;top:402px;width:14px;height:16px;border:1px solid #c8d4ea;border-radius:2px;background:linear-gradient(#ffffff,#e2eaf7);box-sizing:border-box"></div><svg style="position:absolute;left:473px;top:320px" width="14" height="16"><path d="M3.5 9.5 L7 6 L10.5 9.5" stroke="#b5c4dc" stroke-width="1.6" fill="none"/></svg><svg style="position:absolute;left:473px;top:402px" width="14" height="16"><path d="M3.5 6.5 L7 10 L10.5 6.5" stroke="#b5c4dc" stroke-width="1.6" fill="none"/></svg><svg style="position:absolute;left:501px;top:342px" width="12" height="30"><path d="M6 2 L11 9 L1 9 Z M1 21 L11 21 L6 28 Z" fill="#a8a8a8"/></svg><div style="position:absolute;left:536px;top:281px;width:198px;height:146px;border:1px solid #a0a0a0;box-shadow:inset 1px 1px 0 #fff, 1px 1px 0 #fff;box-sizing:border-box"></div><div style="position:absolute;left:549px;top:273px;height:16px;background:#ececec;padding:0 4px;font-size:12px;line-height:16px;color:transparent;white-space:nowrap">GPU Settings</div><div style="position:absolute;left:553px;top:274.84px;font-size:12px;line-height:14px;color:#3d62c2;font-weight:normal;white-space:nowrap;">GPU Settings</div><div style="position:absolute;left:545px;top:319.84px;font-size:12px;line-height:14px;color:#000;font-weight:normal;white-space:nowrap;">NVIDIA Corporation</div><div style="position:absolute;left:545px;top:333.84px;font-size:12px;line-height:14px;color:#000;font-weight:normal;white-space:nowrap;">Quadro FX 570M/PCI/SSE2</div><div style="position:absolute;left:545px;top:380px;width:13px;height:13px;border:1px solid #1c5180;background:linear-gradient(135deg,#dcdcd7,#fff);box-sizing:border-box"></div><svg style="position:absolute;left:545px;top:380px" width="13" height="13" viewBox="0 0 13 13"><path d="M3.2 6 L5.3 8.2 L9.6 3.9" stroke="#21a121" stroke-width="2" fill="none" stroke-linecap="square"/></svg><div style="position:absolute;left:561px;top:380.84px;font-size:12px;line-height:14px;color:#000;font-weight:normal;white-space:nowrap;">Enable OpenGL Drawing</div><div style="position:absolute;left:546px;top:402px;width:134px;height:18px;border:2px solid #2f57b4;border-radius:3px;box-sizing:border-box;background:linear-gradient(#ffffff 0%,#f2f5fa 35%,#d4dcea 70%,#a9b8d2 100%)"></div><div style="position:absolute;left:313px;width:600px;text-align:center;top:404.84px;font-size:12px;line-height:14px;color:#000;font-weight:normal;white-space:nowrap;">Advanced Settings...</div><div style="position:absolute;left:204px;top:448px;width:556px;height:75px;border:1px solid #a0a0a0;box-shadow:inset 1px 1px 0 #fff, 1px 1px 0 #fff;box-sizing:border-box"></div><div style="position:absolute;left:217px;top:440px;height:16px;background:#ececec;padding:0 4px;font-size:12px;line-height:16px;color:transparent;white-space:nowrap">Description</div><div style="position:absolute;left:221px;top:440.84px;font-size:12px;line-height:14px;color:#3d62c2;font-weight:normal;white-space:nowrap;">Description</div><div style="position:absolute;left:213px;top:461.84px;font-size:12px;line-height:14px;color:#000;font-weight:normal;white-space:nowrap;letter-spacing:0.14px">Enable OpenGL Drawing activates certain features and interface enhancements.</div><div style="position:absolute;left:213px;top:475.84px;font-size:12px;line-height:14px;color:#000;font-weight:normal;white-space:nowrap;letter-spacing:0.14px">Features: Rotate View tool, Birdseye zooming, Pixel Grid, Flick to Scroll preference.</div><div style="position:absolute;left:213px;top:489.84px;font-size:12px;line-height:14px;color:#000;font-weight:normal;white-space:nowrap;letter-spacing:0.14px">Enhancements: smooth pan and zoom, drop shadow for canvas border.</div><div style="position:absolute;left:706px;top:362px;width:370px;height:268px;background:#2f5cbc;border-radius:7px 7px 0 0"></div><div style="position:absolute;left:707px;top:363px;width:368px;height:266px;background:#72a4ea;border-radius:6px 6px 0 0"></div><div style="position:absolute;left:708px;top:364px;width:366px;height:264px;background:#2450b0;border-radius:5px 5px 0 0"></div><div style="position:absolute;left:707px;top:363px;width:368px;height:28px;border-radius:6px 6px 0 0;background:linear-gradient(#86c0f1 0%,#6aa6e8 30%,#3f80d8 48%,#3d7ad2 70%,#2e5fbf 90%,#2b56b3 100%)"></div><div style="position:absolute;left:713.5px;top:371.67px;font-size:12.5px;line-height:15px;color:#fff;font-weight:bold;white-space:nowrap;text-shadow:1px 1px 0 #1a3a8a">GL Settings</div><div style="position:absolute;left:1051px;top:368px;width:19px;height:19px;border-radius:3px;border:1px solid #fff8;box-sizing:border-box;background:linear-gradient(#e98a6a 0%,#e16a45 45%,#d9482a 55%,#e0785c 100%)"></div><svg style="position:absolute;left:1051px;top:368px" width="19" height="19" viewBox="0 0 19 19"><path d="M5 5 L14 14 M14 5 L5 14" stroke="#fff" stroke-width="2.2"/></svg><div style="position:absolute;left:709px;top:391px;width:364px;height:236px;background:#ececec"></div><div style="position:absolute;left:721px;top:410px;width:251px;height:71px;border:1px solid #a0a0a0;box-shadow:inset 1px 1px 0 #fff, 1px 1px 0 #fff;box-sizing:border-box"></div><div style="position:absolute;left:733px;top:402px;height:16px;background:#ececec;padding:0 4px;font-size:12px;line-height:16px;color:transparent;white-space:nowrap">General</div><div style="position:absolute;left:737px;top:402.84px;font-size:12px;line-height:14px;color:#3d62c2;font-weight:normal;white-space:nowrap;">General</div><div style="position:absolute;left:729px;top:422px;width:13px;height:13px;border:1px solid #1c5180;background:linear-gradient(135deg,#dcdcd7,#fff);box-sizing:border-box"></div><svg style="position:absolute;left:729px;top:422px" width="13" height="13" viewBox="0 0 13 13"><path d="M3.2 6 L5.3 8.2 L9.6 3.9" stroke="#21a121" stroke-width="2" fill="none" stroke-linecap="square"/></svg><div style="position:absolute;left:745px;top:423.14px;font-size:12px;line-height:14px;color:#000;font-weight:normal;white-space:nowrap;">Vertical Sync</div><div style="position:absolute;left:729px;top:442px;width:13px;height:13px;border:1px solid #1c5180;background:linear-gradient(135deg,#dcdcd7,#fff);box-sizing:border-box"></div><svg style="position:absolute;left:729px;top:442px" width="13" height="13" viewBox="0 0 13 13"><path d="M3.2 6 L5.3 8.2 L9.6 3.9" stroke="#21a121" stroke-width="2" fill="none" stroke-linecap="square"/></svg><div style="position:absolute;left:745px;top:443.14px;font-size:12px;line-height:14px;color:#000;font-weight:normal;white-space:nowrap;">3D Interaction Acceleration</div><div style="position:absolute;left:729px;top:462px;width:13px;height:13px;border:1px solid #1c5180;background:linear-gradient(135deg,#dcdcd7,#fff);box-sizing:border-box"></div><svg style="position:absolute;left:729px;top:462px" width="13" height="13" viewBox="0 0 13 13"><path d="M3.2 6 L5.3 8.2 L9.6 3.9" stroke="#21a121" stroke-width="2" fill="none" stroke-linecap="square"/></svg><div style="position:absolute;left:745px;top:463.14px;font-size:12px;line-height:14px;color:#000;font-weight:normal;white-space:nowrap;">Force Bilinear Interpolation</div><div style="position:absolute;left:991px;top:408px;width:71px;height:18px;border:1px solid #2a4b8c;border-radius:2.5px;box-sizing:border-box;background:linear-gradient(#fdfdfe 0%,#f2f4f8 40%,#cfd8e6 68%,#a9b7cf 100%);"></div><div style="position:absolute;left:726.5px;width:600px;text-align:center;top:410.84px;font-size:12px;line-height:14px;color:#000;font-weight:normal;white-space:nowrap;">OK</div><div style="position:absolute;left:991px;top:436px;width:71px;height:18px;border:1px solid #2a4b8c;border-radius:2.5px;box-sizing:border-box;background:linear-gradient(#fdfdfe 0%,#f2f4f8 40%,#cfd8e6 68%,#a9b7cf 100%);"></div><div style="position:absolute;left:726.5px;width:600px;text-align:center;top:438.84px;font-size:12px;line-height:14px;color:#000;font-weight:normal;white-space:nowrap;">Cancel</div><div style="position:absolute;left:721px;top:502px;width:251px;height:112px;border:1px solid #a0a0a0;box-shadow:inset 1px 1px 0 #fff, 1px 1px 0 #fff;box-sizing:border-box"></div><div style="position:absolute;left:731px;top:494px;width:134px;height:14px;background:#ececec"></div><div style="position:absolute;left:735px;top:495px;width:13px;height:13px;border:1px solid #1c5180;background:linear-gradient(135deg,#dcdcd7,#fff);box-sizing:border-box"></div><svg style="position:absolute;left:735px;top:495px" width="13" height="13" viewBox="0 0 13 13"><path d="M3.2 6 L5.3 8.2 L9.6 3.9" stroke="#21a121" stroke-width="2" fill="none" stroke-linecap="square"/></svg><div style="position:absolute;left:751px;top:494.84px;font-size:12px;line-height:14px;color:#000;font-weight:normal;white-space:nowrap;">Advanced Drawing</div><div style="position:absolute;left:778px;top:514px;width:13px;height:13px;border:1px solid #1c5180;background:linear-gradient(135deg,#dcdcd7,#fff);box-sizing:border-box"></div><svg style="position:absolute;left:778px;top:514px" width="13" height="13" viewBox="0 0 13 13"><path d="M3.2 6 L5.3 8.2 L9.6 3.9" stroke="#21a121" stroke-width="2" fill="none" stroke-linecap="square"/></svg><div style="position:absolute;left:794px;top:514.84px;font-size:12px;line-height:14px;color:#000;font-weight:normal;white-space:nowrap;">Use For Image Display</div><div style="position:absolute;left:730px;top:544px;width:232px;height:60px;border:1px solid #a0a0a0;box-shadow:inset 1px 1px 0 #fff, 1px 1px 0 #fff;box-sizing:border-box"></div><div style="position:absolute;left:743px;top:536px;height:16px;background:#ececec;padding:0 4px;font-size:12px;line-height:16px;color:transparent;white-space:nowrap">Debugging</div><div style="position:absolute;left:747px;top:536.84px;font-size:12px;line-height:14px;color:#3d62c2;font-weight:normal;white-space:nowrap;">Debugging</div><div style="position:absolute;left:739px;top:561.84px;font-size:12px;line-height:14px;color:#000;font-weight:normal;white-space:nowrap;">Compositing:</div><div style="position:absolute;left:813px;top:557px;width:142px;height:22px;background:#fff;border:1px solid #a5a5a5;box-sizing:border-box"></div><div style="position:absolute;left:937px;top:558px;width:17px;height:20px;border:1px solid #98a8c0;box-sizing:border-box;background:linear-gradient(#f0f5fc,#c3d3ea)"></div><svg style="position:absolute;left:937px;top:558px" width="17" height="20"><path d="M4.5 8 L8.5 12 L12.5 8" stroke="#4a5670" stroke-width="2" fill="none"/></svg><div style="position:absolute;left:820px;top:561.84px;font-size:12px;line-height:14px;color:#000;font-weight:normal;white-space:nowrap;">Gamma Corrected</div><div style="position:absolute;left:739px;top:585px;width:13px;height:13px;border:1px solid #1c5180;background:linear-gradient(135deg,#dcdcd7,#fff);box-sizing:border-box"></div><svg style="position:absolute;left:739px;top:585px" width="13" height="13" viewBox="0 0 13 13"><path d="M3.2 6 L5.3 8.2 L9.6 3.9" stroke="#21a121" stroke-width="2" fill="none" stroke-linecap="square"/></svg><div style="position:absolute;left:755px;top:584.84px;font-size:12px;line-height:14px;color:#000;font-weight:normal;white-space:nowrap;">Color Matching</div><div style="position:absolute;left:1148px;top:201px;width:414px;height:429px;background:#808080"></div><div style="position:absolute;left:0;top:0;width:1600px;height:631px;clip-path:inset(201px 38px 0 1148px)"><div style="position:absolute;left:1148px;top:201px;width:326px;height:268px;background:#0a36d6"></div><div style="position:absolute;left:1148px;top:201px;width:323px;height:265px;background:#ececec"></div><div style="position:absolute;left:1130px;top:215px;width:52px;height:143px;border:1px solid #d0d0bf;box-shadow:inset 1px 1px 0 #fff;box-sizing:border-box"></div><div style="position:absolute;left:1195px;top:215px;width:175px;height:143px;border:1px solid #a9a98e;box-shadow:inset 1px 1px 0 #fff, 1px 1px 0 #fff;box-sizing:border-box"></div><div style="position:absolute;left:1206px;top:207px;height:16px;background:#ececec;padding:0 4px;font-size:12px;line-height:16px;color:transparent;white-space:nowrap">GPU Settings</div><div style="position:absolute;left:1210px;top:208.44px;font-size:12px;line-height:14px;color:#0046d5;font-weight:normal;white-space:nowrap;">GPU Settings</div><div style="position:absolute;left:1202px;top:252.86px;font-size:10.5px;line-height:13px;color:#000;font-weight:normal;white-space:nowrap;">NVIDIA Corporation</div><div style="position:absolute;left:1202px;top:265.54px;font-size:10px;line-height:12px;color:#000;font-weight:normal;white-space:nowrap;">Quadro FX 560/PCI/SSE2</div><svg style="position:absolute;left:1159px;top:273px" width="12" height="32"><path d="M6 2 L11 9 L1 9 Z M1 22 L11 22 L6 29 Z" fill="#a8a8a8"/></svg><div style="position:absolute;left:1203px;top:311px;width:13px;height:13px;border:1px solid #1c5180;background:linear-gradient(135deg,#dcdcd7,#fff);box-sizing:border-box"></div><svg style="position:absolute;left:1203px;top:311px" width="13" height="13" viewBox="0 0 13 13"><path d="M3.2 6 L5.3 8.2 L9.6 3.9" stroke="#21a121" stroke-width="2" fill="none" stroke-linecap="square"/></svg><div style="position:absolute;left:1218.5px;top:311.84px;font-size:12px;line-height:14px;color:#000;font-weight:normal;white-space:nowrap;">Enable OpenGL Drawing</div><div style="position:absolute;left:1204px;top:333px;width:134px;height:18px;border:1px solid #003c74;border-radius:3px;box-sizing:border-box;background:linear-gradient(#ffffff 0%,#f7f7f4 60%,#ecebe4 85%,#d6d0c5 100%);box-shadow:inset 0 0 0 1px #98b8ea, inset 0 -1px 0 1px #6b92db"></div><div style="position:absolute;left:971px;width:600px;text-align:center;top:334.84px;font-size:12px;line-height:14px;color:#000;font-weight:normal;white-space:nowrap;">Advanced Settings...</div><div style="position:absolute;left:1130px;top:379px;width:70px;height:67px;border:1px solid #d0d0bf;box-shadow:inset 1px 1px 0 #fff;box-sizing:border-box"></div><div style="position:absolute;left:1144px;top:391.86px;font-size:10.5px;line-height:13px;color:#000;font-weight:normal;white-space:nowrap;">ce e</div><div style="position:absolute;left:1151px;top:403.86px;font-size:10.5px;line-height:13px;color:#000;font-weight:normal;white-space:nowrap;">to</div><div style="position:absolute;left:1145px;top:415.86px;font-size:10.5px;line-height:13px;color:#000;font-weight:normal;white-space:nowrap;">ras l</div></div><div style="position:absolute;left:1163px;top:361px;width:370px;height:267px;background:#0b3fd8;border-radius:7px 7px 0 0;box-shadow:inset 0 0 0 1px #0831a8"></div><div style="position:absolute;left:1164px;top:362px;width:368px;height:28px;border-radius:6px 6px 0 0;background:linear-gradient(#3d8bf8 0%,#0a64f2 12%,#0058ec 40%,#0054e6 70%,#0048d6 95%,#003fc4 100%)"></div><div style="position:absolute;left:1169.5px;top:369.67px;font-size:12.5px;line-height:15px;color:#fff;font-weight:bold;white-space:nowrap;text-shadow:1px 1px 0 #0a246a">GL Settings</div><div style="position:absolute;left:1507px;top:366px;width:21px;height:21px;border-radius:3px;border:1px solid #fff;box-sizing:border-box;background:linear-gradient(135deg,#f0a080 0%,#e25a30 50%,#c63a12 100%)"></div><svg style="position:absolute;left:1507px;top:366px" width="21" height="21" viewBox="0 0 21 21"><path d="M6 6 L15 15 M15 6 L6 15" stroke="#fff" stroke-width="2.4"/></svg><div style="position:absolute;left:1166px;top:390px;width:364px;height:235px;background:#ececec"></div><div style="position:absolute;left:1177px;top:408px;width:252px;height:72px;border:1px solid #a9a98e;box-shadow:inset 1px 1px 0 #fff, 1px 1px 0 #fff;box-sizing:border-box"></div><div style="position:absolute;left:1189px;top:400px;height:16px;background:#ececec;padding:0 4px;font-size:12px;line-height:16px;color:transparent;white-space:nowrap">General</div><div style="position:absolute;left:1193px;top:400.84px;font-size:12px;line-height:14px;color:#0046d5;font-weight:normal;white-space:nowrap;">General</div><div style="position:absolute;left:1186px;top:421px;width:13px;height:13px;border:1px solid #1c5180;background:linear-gradient(135deg,#dcdcd7,#fff);box-sizing:border-box"></div><svg style="position:absolute;left:1186px;top:421px" width="13" height="13" viewBox="0 0 13 13"><path d="M3.2 6 L5.3 8.2 L9.6 3.9" stroke="#21a121" stroke-width="2" fill="none" stroke-linecap="square"/></svg><div style="position:absolute;left:1201.5px;top:422.14px;font-size:12px;line-height:14px;color:#000;font-weight:normal;white-space:nowrap;">Vertical Sync</div><div style="position:absolute;left:1186px;top:441px;width:13px;height:13px;border:1px solid #1c5180;background:linear-gradient(135deg,#dcdcd7,#fff);box-sizing:border-box"></div><svg style="position:absolute;left:1186px;top:441px" width="13" height="13" viewBox="0 0 13 13"><path d="M3.2 6 L5.3 8.2 L9.6 3.9" stroke="#21a121" stroke-width="2" fill="none" stroke-linecap="square"/></svg><div style="position:absolute;left:1201.5px;top:442.14px;font-size:12px;line-height:14px;color:#000;font-weight:normal;white-space:nowrap;">3D Interaction Acceleration</div><div style="position:absolute;left:1186px;top:461px;width:13px;height:13px;border:1px solid #1c5180;background:linear-gradient(135deg,#dcdcd7,#fff);box-sizing:border-box"></div><svg style="position:absolute;left:1186px;top:461px" width="13" height="13" viewBox="0 0 13 13"><path d="M3.2 6 L5.3 8.2 L9.6 3.9" stroke="#21a121" stroke-width="2" fill="none" stroke-linecap="square"/></svg><div style="position:absolute;left:1201.5px;top:462.14px;font-size:12px;line-height:14px;color:#000;font-weight:normal;white-space:nowrap;">Force Bilinear Interpolation</div><div style="position:absolute;left:1448px;top:407px;width:71px;height:18px;border:1px solid #003c74;border-radius:3px;box-sizing:border-box;background:linear-gradient(#ffffff 0%,#f7f7f4 60%,#ecebe4 85%,#d6d0c5 100%);box-shadow:inset 0 0 0 1px #98b8ea, inset 0 -1px 0 1px #6b92db;"></div><div style="position:absolute;left:1183.5px;width:600px;text-align:center;top:409.84px;font-size:12px;line-height:14px;color:#000;font-weight:normal;white-space:nowrap;">OK</div><div style="position:absolute;left:1448px;top:435px;width:71px;height:18px;border:1px solid #003c74;border-radius:3px;box-sizing:border-box;background:linear-gradient(#ffffff 0%,#f7f7f4 60%,#ecebe4 85%,#d6d0c5 100%);"></div><div style="position:absolute;left:1183.5px;width:600px;text-align:center;top:437.84px;font-size:12px;line-height:14px;color:#000;font-weight:normal;white-space:nowrap;">Cancel</div><div style="position:absolute;left:1177px;top:500px;width:252px;height:112px;border:1px solid #a9a98e;box-shadow:inset 1px 1px 0 #fff, 1px 1px 0 #fff;box-sizing:border-box"></div><div style="position:absolute;left:1188px;top:492px;width:132px;height:16px;background:#ececec"></div><div style="position:absolute;left:1192px;top:493px;width:13px;height:13px;border:1px solid #1c5180;background:linear-gradient(135deg,#dcdcd7,#fff);box-sizing:border-box"></div><svg style="position:absolute;left:1192px;top:493px" width="13" height="13" viewBox="0 0 13 13"><path d="M3.2 6 L5.3 8.2 L9.6 3.9" stroke="#21a121" stroke-width="2" fill="none" stroke-linecap="square"/></svg><div style="position:absolute;left:1208px;top:493.84px;font-size:12px;line-height:14px;color:#000;font-weight:normal;white-space:nowrap;">Advanced Drawing</div><div style="position:absolute;left:1235px;top:514px;width:13px;height:13px;border:1px solid #cac8bb;background:#fff;box-sizing:border-box"></div><div style="position:absolute;left:1250px;top:513.84px;font-size:12px;line-height:14px;color:#aca899;font-weight:normal;white-space:nowrap;">Use For Image Display</div><div style="position:absolute;left:1188px;top:542px;width:231px;height:61px;border:1px solid #a9a98e;box-shadow:inset 1px 1px 0 #fff, 1px 1px 0 #fff;box-sizing:border-box"></div><div style="position:absolute;left:1199px;top:534px;height:16px;background:#ececec;padding:0 4px;font-size:12px;line-height:16px;color:transparent;white-space:nowrap">Debugging</div><div style="position:absolute;left:1203px;top:534.84px;font-size:12px;line-height:14px;color:#0046d5;font-weight:normal;white-space:nowrap;">Debugging</div><div style="position:absolute;left:1195px;top:560.84px;font-size:12px;line-height:14px;color:#aca899;font-weight:normal;white-space:nowrap;">Compositing:</div><div style="position:absolute;left:1270px;top:556px;width:142px;height:22px;background:#fff;border:1px solid #c9c7ba;box-sizing:border-box"></div><div style="position:absolute;left:1393px;top:557px;width:18px;height:20px;border:1px solid #e0e0d8;box-sizing:border-box;background:#f3f3ee"></div><svg style="position:absolute;left:1393px;top:557px" width="18" height="20"><path d="M5 8 L9 12 L13 8" stroke="#c9c7ba" stroke-width="2" fill="none"/></svg><div style="position:absolute;left:1276px;top:560.84px;font-size:12px;line-height:14px;color:#aca899;font-weight:normal;white-space:nowrap;">Linear</div><div style="position:absolute;left:1196px;top:584px;width:13px;height:13px;border:1px solid #cac8bb;background:#fff;box-sizing:border-box"></div><div style="position:absolute;left:1211px;top:583.84px;font-size:12px;line-height:14px;color:#aca899;font-weight:normal;white-space:nowrap;">Color Matching</div></div>
<div style="position:absolute;left:0;top:679.60px;width:1600px;height:48px"><div style="position:absolute;left:126.5px;top:0;font-size:20.5px;line-height:24px;color:#fff;white-space:nowrap">Open GL Performance Settings &gt; Enabled<br>for NVIDIA Quadro FX 570m</div></div>
<div style="position:absolute;left:0;top:679.60px;width:1600px;height:48px;transform-origin:0 45.30px;transform:scaleY(-1);opacity:0.55"><div style="position:absolute;left:126.5px;top:0;font-size:20.5px;line-height:24px;color:#fff;white-space:nowrap">Open GL Performance Settings &gt; Enabled<br>for NVIDIA Quadro FX 570m</div></div>
<div style="position:absolute;left:0;top:679.60px;width:1600px;height:48px"><div style="position:absolute;left:1106.5px;top:0;font-size:20.5px;line-height:24px;color:#fff;white-space:nowrap">Open GL Performance Settings &gt; Enabled<br>for NVIDIA Quadro FX 560</div></div>
<div style="position:absolute;left:0;top:679.60px;width:1600px;height:48px;transform-origin:0 45.30px;transform:scaleY(-1);opacity:0.55"><div style="position:absolute;left:1106.5px;top:0;font-size:20.5px;line-height:24px;color:#fff;white-space:nowrap">Open GL Performance Settings &gt; Enabled<br>for NVIDIA Quadro FX 560</div></div>
</body></html>
